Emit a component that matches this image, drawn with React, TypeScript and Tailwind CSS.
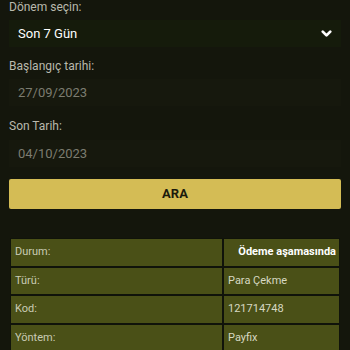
import { ChevronDown } from 'lucide-react';

const rows = [
  { label: 'Durum:', value: 'Ödeme aşamasında', strong: true },
  { label: 'Türü:', value: 'Para Çekme' },
  { label: 'Kod:', value: '121714748' },
  { label: 'Yöntem:', value: 'Payfix' },
];

export default function App() {
  return (
    <div
      className="w-[350px] h-[350px] overflow-hidden bg-[#14160c] px-[9px]"
      style={{ fontFamily: 'Roboto, "Liberation Sans", sans-serif' }}
    >
      {/* Period select */}
      <div className="text-[12px] leading-[15px] text-[#b9b9ad]">Dönem seçin:</div>
      <div className="mt-[5px] h-[27px] flex items-center justify-between bg-[#151b0b] pl-[9px] pr-[7px]">
        <span className="text-[13px] text-white">Son 7 Gün</span>
        <ChevronDown className="w-[15px] h-[15px] text-white" strokeWidth={4.5} />
      </div>

      {/* Start date */}
      <div className="mt-[12px] text-[12px] leading-[15px] text-[#b9b9ad]">Başlangıç tarihi:</div>
      <div className="mt-[5px] h-[27px] flex items-center bg-[#16180d] pl-[9px]">
        <span className="text-[13px] text-[#7c7c70]">27/09/2023</span>
      </div>

      {/* End date */}
      <div className="mt-[13px] text-[12px] leading-[15px] text-[#b9b9ad]">Son Tarih:</div>
      <div className="mt-[6px] h-[27px] flex items-center bg-[#16180d] pl-[9px]">
        <span className="text-[13px] text-[#7c7c70]">04/10/2023</span>
      </div>

      <button className="mt-[12px] w-full h-[30px] rounded-[2px] bg-[#d4bc55] text-[13px] font-bold text-[#1b1a0c]">
        ARA
      </button>

      {/* Details table */}
      <div className="mt-[29px] mx-px bg-[#10130a] p-[1px]">
        {rows.map((r) => (
          <div key={r.label} className="grid grid-cols-[211px_1fr] gap-[2px] mb-[2px]">
            <div className="h-[26.5px] flex items-center bg-[#4a5017] pl-[4px] text-[11px] text-[#c9cbb4]">
              {r.label}
            </div>
            <div
              className={
                r.strong
                  ? 'h-[26.5px] flex items-center justify-end bg-[#4a5017] pr-[3px] text-[11px] font-bold text-white'
                  : 'h-[26.5px] flex items-center bg-[#4a5017] pl-[4px] text-[11px] text-[#d6d8c2]'
              }
            >
              {r.value}
            </div>
          </div>
        ))}
      </div>
    </div>
  );
}
